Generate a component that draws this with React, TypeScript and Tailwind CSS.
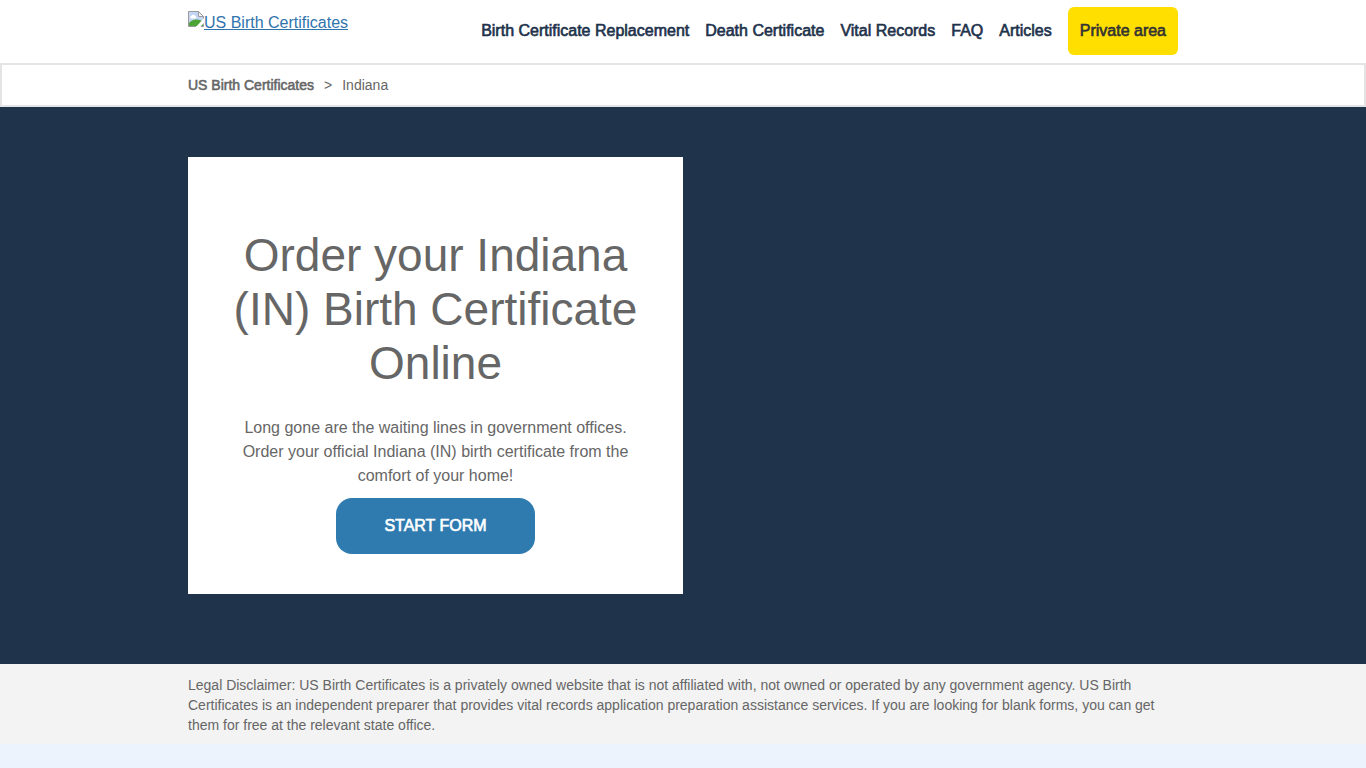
import type { ReactNode } from 'react';

const NAV_LINKS = [
  { label: 'Birth Certificate Replacement', href: '#replacement' },
  { label: 'Death Certificate', href: '#death-certificate' },
  { label: 'Vital Records', href: '#vital-records' },
  { label: 'FAQ', href: '#faq' },
  { label: 'Articles', href: '#articles' },
];

function Container({ children, className = '' }: { children: ReactNode; className?: string }) {
  return <div className={`mx-auto w-full max-w-[990px] ${className}`}>{children}</div>;
}

function MissingImageIcon() {
  return (
    <svg viewBox="0 0 16 16" className="h-4 w-4 shrink-0" aria-hidden="true">
      <path d="M.5.5h10l5 5v10H.5z" fill="#fff" />
      <path d="M1 1h9v5h5v9H1z" fill="#c3d5f5" />
      <path d="M3 7.500a1.500 1.500 0 0 1 .5-2.800 2 2 0 0 1 3.500 0 1.500 1.500 0 0 1 .5 2.800z" fill="#fff" />
      <path d="M1 15v-3C3 9.500 6 8 9 8.500c2.500 0 5 1 6 2.500v4z" fill="#4da336" />
      <path d="M16 7 8 16h4l4-4z" fill="#fff" />
      <path d="M8 15.500H.5V.5h10l5 5v2M15.500 12.500v3H13" fill="none" stroke="#9b9b9b" />
      <path d="M10.500.5v5h5z" fill="#f3f3f3" stroke="#9b9b9b" />
    </svg>
  );
}

function Header() {
  return (
    <header className="bg-white pt-[7px] pb-2">
      <Container className="flex items-start justify-between">
        <a href="#home" className="mt-1 flex text-[#2f73ad]">
          <MissingImageIcon />
          <span className="underline">US Birth Certificates</span>
        </a>
        <nav className="flex items-center gap-4 text-[#1e324b] [-webkit-text-stroke:0.04em]">
          {NAV_LINKS.map((link) => (
            <a key={link.href} href={link.href}>
              {link.label}
            </a>
          ))}
          <a href="#private-area" className="rounded-md bg-[#ffdf00] p-3 text-[#333]">
            Private area
          </a>
        </nav>
      </Container>
    </header>
  );
}

function Breadcrumb() {
  return (
    <nav aria-label="Breadcrumb" className="border-2 border-[#e4e4e4] bg-white py-2.5 text-sm">
      <Container>
        <ol className="flex gap-2.5">
          <li>
            <a href="#home" className="[-webkit-text-stroke:0.04em]">
              US Birth Certificates
            </a>
          </li>
          <li aria-hidden="true">&gt;</li>
          <li aria-current="page">Indiana</li>
        </ol>
      </Container>
    </nav>
  );
}

function Hero() {
  return (
    <section className="bg-[#1f334b] pt-[50px] pb-[70px]">
      <Container>
        <div className="w-1/2 bg-white px-10 pt-[71px] pb-10 text-center">
          <h1 className="text-[46px] leading-[54px]">Order your Indiana (IN) Birth Certificate Online</h1>
          <p className="mt-[26px]">
            Long gone are the waiting lines in government offices. Order your official Indiana (IN) birth certificate
            from the comfort of your home!
          </p>
          <button
            type="button"
            className="mt-2.5 rounded-2xl bg-[#2f7bb0] px-12 py-4 text-white uppercase [-webkit-text-stroke:0.04em]"
          >
            Start form
          </button>
        </div>
      </Container>
    </section>
  );
}

export default function App() {
  return (
    <div className="min-h-screen bg-[#edf3fc] font-['Liberation_Sans',Arial,sans-serif] text-base text-[#666]">
      <Header />
      <main>
        <Breadcrumb />
        <Hero />
        <section className="bg-[#f3f3f3] pt-[11px] pb-[9px] text-sm">
          <Container>
            <p>
              Legal Disclaimer: US Birth Certificates is a privately owned website that is not affiliated with, not
              owned or operated by any government agency. US Birth Certificates is an independent preparer that
              provides vital records application preparation assistance services. If you are looking for blank forms,
              you can get them for free at the relevant state office.
            </p>
          </Container>
        </section>
      </main>
    </div>
  );
}
